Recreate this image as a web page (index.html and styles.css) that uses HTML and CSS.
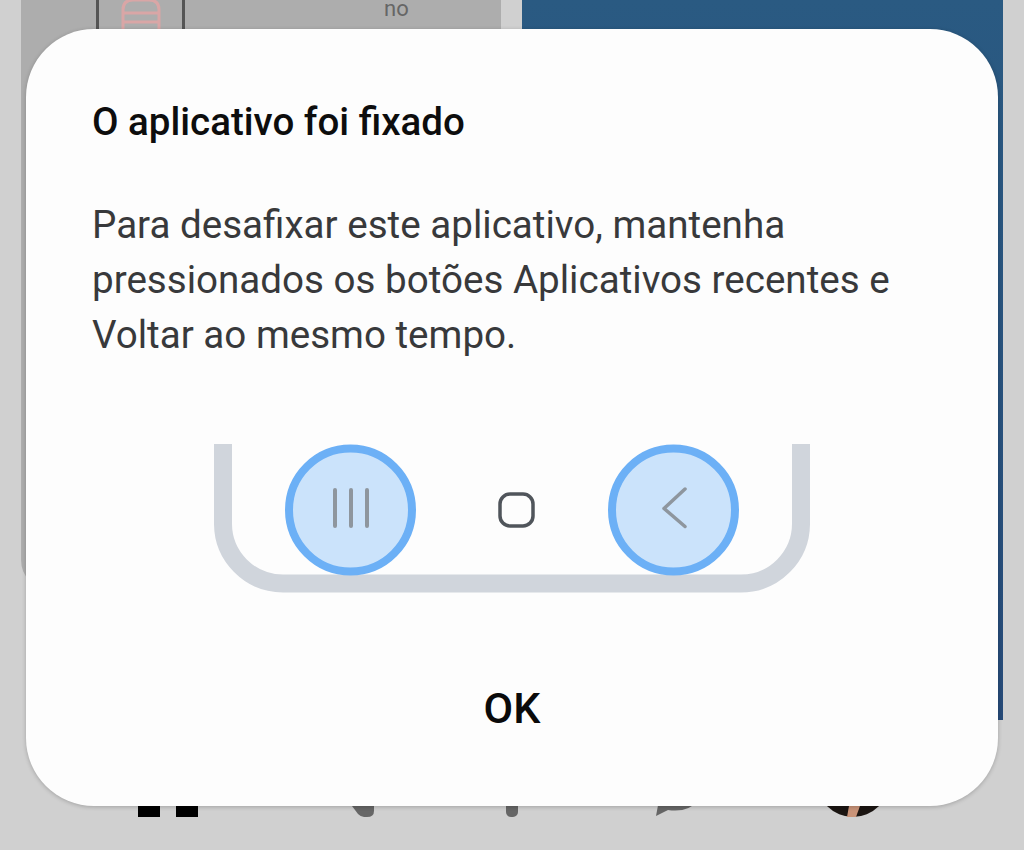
FILE: index.html
```html
<!DOCTYPE html>
<html lang="pt-BR">
<head>
<meta charset="utf-8">
<title>O aplicativo foi fixado</title>
<link rel="stylesheet" href="styles.css">
</head>
<body>
<div class="screen">
  <div class="tiles">
    <div class="tile-grey">
      <div class="row">
        <div class="thumb">
          <svg class="thumb-icon" width="42" height="32" viewBox="0 0 42 32"><path d="M3 32V10Q3 0 13 0H29Q39 0 39 10V32M3 13H39M3 22H39" fill="none" stroke="#d9a6a6" stroke-width="3"/></svg>
        </div>
        <div class="row-label">no</div>
      </div>
    </div>
    <div class="tile-blue"></div>
  </div>
  <nav class="nav">
    <div class="nav-item"><svg width="60" height="37" viewBox="0 0 60 37"><path d="M0 0H22V37H0ZM38 0H60V37H38Z" fill="#000"/></svg></div>
    <div class="nav-item"><svg width="90" height="37" viewBox="0 0 90 37"><path d="M57 26H79V31Q79 37 72 37H69Q66 37 63 34Z" fill="#666"/></svg></div>
    <div class="nav-item"><svg width="60" height="37" viewBox="0 0 60 37"><rect x="24" y="10" width="12" height="27" rx="5" fill="#666"/></svg></div>
    <div class="nav-item"><svg width="60" height="37" viewBox="0 0 60 37"><path d="M2 36L5 20H45Q34 33 14 30Z" fill="#666"/></svg></div>
    <div class="nav-item"><svg width="60" height="37" viewBox="0 0 60 37"><circle cx="27" cy="1" r="36" fill="#1b1512"/><path d="M21 37L23 26H34L30 37Z" fill="#c99378"/></svg></div>
  </nav>

  <div class="dialog">
    <h1 class="title">O aplicativo foi fixado</h1>
    <p class="body">Para desafixar este aplicativo, mantenha<br>pressionados os botões Aplicativos recentes e<br>Voltar ao mesmo tempo.</p>
    <svg class="illustration" width="596" height="150" viewBox="0 0 596 150">
      <path d="M9 0V79A60 60 0 0 0 69 139.500H527A60 60 0 0 0 587 79V0" fill="none" stroke="#d0d5dc" stroke-width="18"/>
      <circle cx="136.500" cy="66" r="61.500" fill="#cbe3fb" stroke="#6cb0f6" stroke-width="8"/>
      <path d="M121 46V82M137 46V82M153 46V82" stroke="#8e969e" stroke-width="4" stroke-linecap="round" fill="none"/>
      <rect x="286" y="50" width="33" height="32" rx="10" fill="none" stroke="#50555b" stroke-width="3.500"/>
      <circle cx="459.500" cy="66" r="61.500" fill="#cbe3fb" stroke="#6cb0f6" stroke-width="8"/>
      <path d="M471 45L450 64.500L471 82.500" stroke="#8e969e" stroke-width="3.500" stroke-linecap="round" stroke-linejoin="round" fill="none"/>
    </svg>
    <div class="action">OK</div>
  </div>
</div>
</body>
</html>
```
FILE: styles.css
```css
html, body {
  margin: 0;
  padding: 0;
}

body {
  background: #d0d0d0;
  font-family: Roboto, "Liberation Sans", sans-serif;
}

.screen {
  position: relative;
  width: 1024px;
  height: 850px;
  overflow: hidden;
}

.tiles {
  display: flex;
  gap: 21px;
  padding-left: 21px;
  height: 720px;
  align-items: flex-start;
}

.tile-grey {
  width: 480px;
  height: 590px;
  background: #adadad;
  border-bottom-left-radius: 30px;
}

.row {
  display: flex;
  height: 40px;
  padding-left: 75px;
}

.thumb {
  box-sizing: border-box;
  width: 89px;
  height: 40px;
  border-left: 3px solid #555;
  border-right: 3px solid #555;
  display: flex;
  justify-content: center;
}

.thumb-icon {
  display: block;
}

.row-label {
  margin-left: 199px;
  font-size: 22px;
  line-height: 18px;
  color: #666;
}

.tile-blue {
  width: 481px;
  height: 720px;
  background: linear-gradient(#2a5a82, #264a78);
}

.nav {
  display: grid;
  grid-template-columns: repeat(5, 172px);
  padding: 60px 0 0 82px;
}

.nav-item {
  display: flex;
  justify-content: center;
  height: 37px;
}

.dialog {
  position: absolute;
  left: 26px;
  top: 29px;
  box-sizing: border-box;
  width: 972px;
  height: 777px;
  padding: 70px 0 0 66px;
  background: #fdfdfd;
  border-radius: 68px;
  box-shadow: 0 1px 4px rgba(0, 0, 0, 0.22);
}

.title {
  margin: 0;
  font-size: 38.500px;
  font-weight: 500;
  line-height: 46px;
  color: #0d0d0d;
}

.body {
  margin: 52px 0 0;
  font-size: 38.600px;
  font-weight: 400;
  line-height: 55px;
  color: #38393b;
}

.illustration {
  display: block;
  margin: 82px 0 0 122px;
}

.action {
  margin: 90px 0 0 -66px;
  text-align: center;
  font-size: 43px;
  font-weight: 500;
  line-height: 48px;
  color: #0a0a0a;
}
```
